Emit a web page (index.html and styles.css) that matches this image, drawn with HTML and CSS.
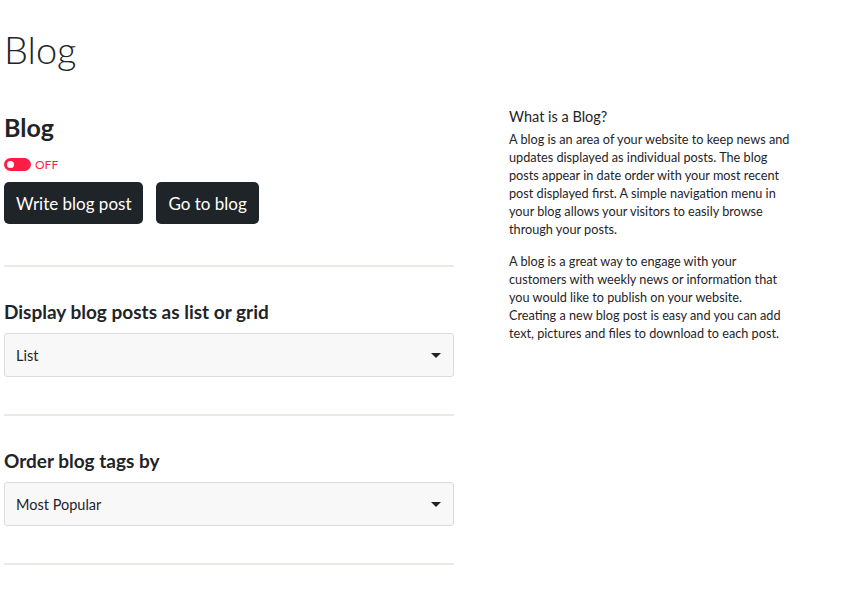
FILE: index.html
```html
<!DOCTYPE html>
<html lang="en">
<head>
    <meta charset="UTF-8">
    <meta name="viewport" content="width=device-width, initial-scale=1.0">
    <title>Blog</title>
    <link rel="stylesheet" href="styles.css">
</head>
<body>
    <h1 class="page-title">Blog</h1>
    <div class="layout">
        <div class="settings">
            <section class="block block-main">
                <h2>Blog</h2>
                <div class="toggle-row">
                    <span class="toggle"><span class="knob"></span></span>
                    <span class="toggle-label">OFF</span>
                </div>
                <div class="actions">
                    <button class="btn">Write blog post</button>
                    <button class="btn">Go to blog</button>
                </div>
            </section>
            <section class="block">
                <h3>Display blog posts as list or grid</h3>
                <div class="select">
                    <span>List</span>
                    <span class="caret"></span>
                </div>
            </section>
            <section class="block">
                <h3>Order blog tags by</h3>
                <div class="select">
                    <span>Most Popular</span>
                    <span class="caret"></span>
                </div>
            </section>
        </div>
        <aside class="help">
            <h4>What is a Blog?</h4>
            <p>A blog is an area of your website to keep news and updates displayed as individual posts. The blog posts appear in date order with your most recent post displayed first. A simple navigation menu in your blog allows your visitors to easily browse through your posts.</p>
            <p>A blog is a great way to engage with your customers with weekly news or information that you would like to publish on your website. Creating a new blog post is easy and you can add text, pictures and files to download to each post.</p>
        </aside>
    </div>
</body>
</html>
```

FILE: styles.css
```css
body {
    margin: 0;
    padding: 0 4px;
    font-family: Lato, "Open Sans", sans-serif;
    color: #1f2428;
    background: #fff;
}

.page-title {
    margin: 27px 0 0;
    font-size: 38px;
    font-weight: 300;
    line-height: 44px;
}

.layout {
    display: flex;
    gap: 55px;
    margin-top: 40px;
}

.settings {
    width: 450px;
}

.block {
    padding-bottom: 37px;
    margin-bottom: 33px;
    border-bottom: 2px solid #e9e9e6;
}

.block-main {
    padding-bottom: 41px;
}

.block h2 {
    margin: 0;
    font-size: 25px;
    font-weight: 700;
    line-height: 32px;
}

.block h3 {
    margin: 0 0 9px;
    font-size: 19px;
    font-weight: 700;
    line-height: 24px;
}

.toggle-row {
    display: flex;
    align-items: center;
    gap: 4px;
    margin-top: 14px;
}

.toggle {
    display: inline-block;
    position: relative;
    width: 27px;
    height: 13px;
    border-radius: 7px;
    background: #fe1e44;
}

.knob {
    position: absolute;
    left: 3px;
    top: 3px;
    width: 7px;
    height: 7px;
    border-radius: 50%;
    background: #fff;
}

.toggle-label {
    font-size: 12px;
    color: #fe1e44;
}

.actions {
    display: flex;
    gap: 13px;
    margin-top: 10px;
}

.btn {
    height: 42px;
    padding: 0 12px;
    border: none;
    border-radius: 5px;
    background: #1f2428;
    color: #fff;
    font-family: inherit;
    font-size: 17px;
}

.select {
    display: flex;
    align-items: center;
    justify-content: space-between;
    height: 42px;
    padding: 0 12px 0 11px;
    border: 1px solid #dcdcdc;
    border-radius: 3px;
    background: #f8f8f8;
    font-size: 14.5px;
}

.caret {
    width: 0;
    height: 0;
    border-left: 5px solid transparent;
    border-right: 5px solid transparent;
    border-top: 5px solid #1f2428;
}

.help {
    width: 281px;
    margin-top: -6px;
    font-size: 12.7px;
    line-height: 18px;
}

.help h4 {
    margin: 2px 0 3px;
    font-size: 14.5px;
    font-weight: 400;
    line-height: 20px;
}

.help p {
    margin: 0 0 14px;
}
```
